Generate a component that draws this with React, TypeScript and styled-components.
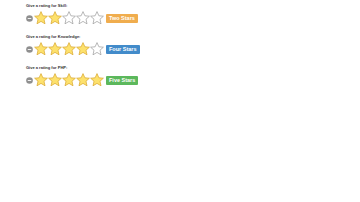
import styled, { createGlobalStyle } from 'styled-components';

const GlobalStyle = createGlobalStyle`
  html, body {
    margin: 0;
    padding: 0;
    background: #fff;
  }
  body {
    font-family: "Liberation Sans", Arial, sans-serif;
    color: #333;
  }
`;

interface RatingProps {
  label: string
  value: number
  caption: string
  tone: string
}

const STAR = '7,0.6 8.9,4.8 13.4,5.2 10,8.2 11,12.8 7,10.4 3,12.8 4,8.2 0.6,5.2 5.1,4.8';

const Star: React.FC<{ filled: boolean }> = ({ filled }) =>
  <StarIcon viewBox="0 0 14 14" aria-hidden>
    <polygon
      points={STAR}
      fill={filled ? '#fde16d' : '#fff'}
      stroke={filled ? '#d9a52b' : '#9a9a9a'}
      strokeWidth="0.7"
      strokeLinejoin="round"
    />
  </StarIcon>;

const Rating: React.FC<RatingProps> = ({ label, value, caption, tone }) =>
  <Group>
    <Label>{label}</Label>
    <Row>
      <Clear>
        <svg viewBox="0 0 8 8" width="7" height="7" aria-hidden>
          <circle cx="4" cy="4" r="3.8" fill="#8f8f8f" />
          <rect x="2" y="3.5" width="4" height="1" fill="#fff" />
        </svg>
      </Clear>
      <Stars>
        {[1, 2, 3, 4, 5].map(i => <Star key={i} filled={i <= value} />)}
      </Stars>
      <Badge tone={tone}>{caption}</Badge>
    </Row>
  </Group>;

const App: React.FC = () =>
  <Page>
    <GlobalStyle />
    <Rating label="Give a rating for Skill:" value={2} caption="Two Stars" tone="#f0ad4e" />
    <Rating label="Give a rating for Knowledge:" value={4} caption="Four Stars" tone="#428bca" />
    <Rating label="Give a rating for PHP:" value={5} caption="Five Stars" tone="#5cb85c" />
  </Page>;

const Page = styled.div`
  display: flex;
  flex-direction: column;
  gap: 8px;
  padding: 3px 0 0 26px;
`;

const Group = styled.div`
  display: flex;
  flex-direction: column;
  gap: 2px;
`;

const Label = styled.div`
  font-size: 4px;
  font-weight: bold;
  line-height: 5px;
  color: #333;
`;

const Row = styled.div`
  display: flex;
  align-items: center;
  height: 16px;
`;

const Clear = styled.span`
  display: flex;
  width: 8px;
`;

const Stars = styled.span`
  display: flex;
`;

const StarIcon = styled.svg`
  width: 14px;
  height: 14px;
`;

const Badge = styled.span<{ tone: string }>`
  margin-left: 2px;
  padding: 0 3px;
  height: 9px;
  line-height: 9px;
  border-radius: 1px;
  background: ${p => p.tone};
  color: #fff;
  font-size: 5.5px;
  font-weight: bold;
  white-space: nowrap;
`;

export default App;
